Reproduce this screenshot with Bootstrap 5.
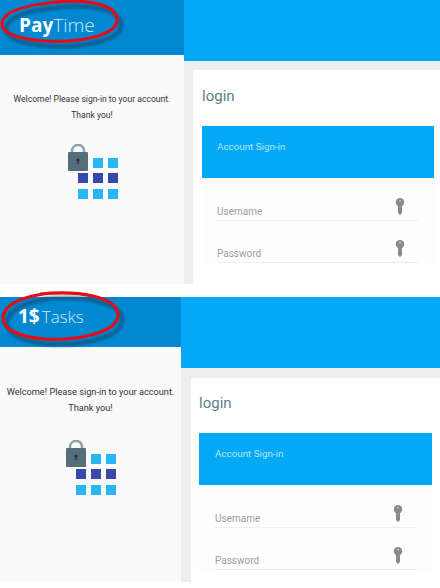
<!DOCTYPE html>
<html lang="en">
  <head>
    <meta charset="UTF-8" />
    <meta name="viewport" content="width=device-width, initial-scale=1.0" />
    <title>Login</title>
    <link href="https://cdn.jsdelivr.net/npm/bootstrap@5.3.0/dist/css/bootstrap.min.css" rel="stylesheet" />
    <style>
      body {
        background-color: #fff;
        font-family: Roboto, "Liberation Sans", sans-serif;
        overflow: hidden;
      }

      .shot {
        position: relative;
        height: 284px;
        margin-bottom: 13px;
      }

      .shot-b {
        height: 285px;
        margin-bottom: 0;
      }

      .side {
        width: 184px;
        flex: none;
        background-color: #fafafa;
      }

      .shot-b .side {
        width: 181px;
      }

      .brand {
        height: 55px;
        background-color: #0288d1;
        color: #fff;
        font-family: "Open Sans", sans-serif;
        font-size: 19px;
        line-height: 50px;
        padding-left: 19px;
      }

      .shot-b .brand {
        height: 50px;
        line-height: 39px;
        padding-left: 18px;
      }

      .brand b {
        font-weight: 700;
      }

      .brand span {
        font-weight: 300;
        color: #cfeafa;
      }

      .shot-b .brand span {
        font-size: 17px;
        margin-left: 2px;
      }

      .welcome {
        padding-top: 36px;
        font-size: 8.6px;
        line-height: 16px;
        color: #333;
      }

      .shot-b .welcome {
        padding-top: 37px;
        font-size: 9.2px;
      }

      .lockart {
        display: block;
        width: 50px;
        height: 56px;
        margin: 21px 0 0 68px;
      }

      .shot-b .lockart {
        margin: 24px 0 0 66px;
      }

      .main {
        background-color: #eceff1;
        min-width: 0;
      }

      .topblue {
        height: 61px;
        background-color: #03a9f4;
      }

      .shot-b .topblue {
        height: 71px;
      }

      .sheet {
        background-color: #fff;
        margin: 9px 0 0 9px;
        padding: 0 6px 0 9px;
      }

      .shot-b .sheet {
        margin: 10px 0 0 10px;
        padding: 0 8px 0 8px;
      }

      .sheet h1 {
        font-size: 15px;
        font-weight: 400;
        color: #607d8b;
        margin: 0;
        padding: 16px 0 19px;
        line-height: 21px;
      }

      .shot-b .sheet h1 {
        padding: 15px 0 19px;
      }

      .signin {
        height: 52px;
        background-color: #03a9f4;
        color: #b3e5fc;
        font-size: 9.8px;
        padding: 14px 15px;
        line-height: 14px;
      }

      .shot-b .signin {
        padding-left: 16px;
      }

      .fields {
        padding: 23px 16px 0 15px;
        background-color: #fdfdfd;
      }

      .shot-b .fields {
        padding: 23px 16px 0 16px;
      }

      .field {
        height: 20px;
        margin-bottom: 22px;
        border-bottom: 1px solid #eeeef2;
        color: #9e9e9e;
        font-size: 10px;
        line-height: 21px;
      }

      .keyicon {
        width: 10px;
        height: 17px;
        margin: -3px 13px 0 0;
      }

      .logo-ring {
        top: 0;
      }

      .shot-b .logo-ring {
        top: -8px;
      }
    </style>
  </head>
  <body>
    <svg width="0" height="0" class="position-absolute">
      <defs>
        <filter id="soft" x="-10%" y="-20%" width="120%" height="140%"><feGaussianBlur stdDeviation="1.6" /></filter>
      </defs>
    </svg>
    <div class="shot d-flex">
      <div class="side">
        <div class="brand"><b>Pay</b><span>Time</span></div>
        <div class="welcome text-center">Welcome! Please sign-in to your account.<br />Thank you!</div>
        <svg class="lockart" viewBox="0 0 50 56">
          <path d="M4 9V6a6 6 0 0 1 6-5h1a6 6 0 0 1 5 5v3" fill="none" stroke="#90a4ae" stroke-width="2.5" />
          <rect x="0" y="8" width="20" height="19" rx="1" fill="#546e7a" />
          <circle cx="10" cy="16" r="1.6" fill="#263238" /><rect x="9.3" y="16" width="1.4" height="4" fill="#263238" />
          <g fill="#29b6f6">
            <rect x="25" y="14" width="10" height="10" /><rect x="40" y="14" width="10" height="10" />
            <rect x="10" y="45" width="10" height="10" /><rect x="25" y="45" width="10" height="10" /><rect x="40" y="45" width="10" height="10" />
          </g>
          <g fill="#3949ab">
            <rect x="10" y="29" width="10" height="10" /><rect x="25" y="29" width="10" height="10" /><rect x="40" y="29" width="10" height="10" />
          </g>
        </svg>
      </div>
      <div class="main flex-grow-1 overflow-hidden">
        <div class="topblue"></div>
        <div class="sheet h-100">
          <h1>login</h1>
          <div class="signin">Account Sign-in</div>
          <div class="fields">
            <div class="field d-flex justify-content-between">Username
              <svg class="keyicon" viewBox="0 0 10 17"><circle cx="5" cy="4.2" r="4.2" fill="#8a8a8a" /><path d="M3 7h4v8l-2 2-2-2z" fill="#8a8a8a" /><circle cx="5" cy="2.6" r=".9" fill="#ccc" /></svg>
            </div>
            <div class="field d-flex justify-content-between">Password
              <svg class="keyicon" viewBox="0 0 10 17"><circle cx="5" cy="4.2" r="4.2" fill="#8a8a8a" /><path d="M3 7h4v8l-2 2-2-2z" fill="#8a8a8a" /><circle cx="5" cy="2.6" r=".9" fill="#ccc" /></svg>
            </div>
          </div>
        </div>
      </div>
      <svg class="position-absolute start-0 logo-ring" width="130" height="56" viewBox="0 0 130 56">
        <path d="M48 3C85 -2 117 4 117 20C117 36 78 43 45 41C17 39 1 33 2 23C3 11 26 5 57 2" fill="none" stroke="#0b3a5c" stroke-opacity=".6" stroke-width="4" transform="translate(4 5)" filter="url(#soft)" />
        <path d="M48 3C85 -2 117 4 117 20C117 36 78 43 45 41C17 39 1 33 2 23C3 11 26 5 57 2" fill="none" stroke="#e30d17" stroke-width="3.2" />
      </svg>
    </div>

    <div class="shot shot-b d-flex">
      <div class="side">
        <div class="brand"><b>1$</b><span>Tasks</span></div>
        <div class="welcome text-center">Welcome! Please sign-in to your account.<br />Thank you!</div>
        <svg class="lockart" viewBox="0 0 50 56">
          <path d="M4 9V6a6 6 0 0 1 6-5h1a6 6 0 0 1 5 5v3" fill="none" stroke="#90a4ae" stroke-width="2.5" />
          <rect x="0" y="8" width="20" height="19" rx="1" fill="#546e7a" />
          <circle cx="10" cy="16" r="1.6" fill="#263238" /><rect x="9.3" y="16" width="1.4" height="4" fill="#263238" />
          <g fill="#29b6f6">
            <rect x="25" y="14" width="10" height="10" /><rect x="40" y="14" width="10" height="10" />
            <rect x="10" y="45" width="10" height="10" /><rect x="25" y="45" width="10" height="10" /><rect x="40" y="45" width="10" height="10" />
          </g>
          <g fill="#3949ab">
            <rect x="10" y="29" width="10" height="10" /><rect x="25" y="29" width="10" height="10" /><rect x="40" y="29" width="10" height="10" />
          </g>
        </svg>
      </div>
      <div class="main flex-grow-1 overflow-hidden">
        <div class="topblue"></div>
        <div class="sheet h-100">
          <h1>login</h1>
          <div class="signin">Account Sign-in</div>
          <div class="fields">
            <div class="field d-flex justify-content-between">Username
              <svg class="keyicon" viewBox="0 0 10 17"><circle cx="5" cy="4.2" r="4.2" fill="#8a8a8a" /><path d="M3 7h4v8l-2 2-2-2z" fill="#8a8a8a" /><circle cx="5" cy="2.6" r=".9" fill="#ccc" /></svg>
            </div>
            <div class="field d-flex justify-content-between">Password
              <svg class="keyicon" viewBox="0 0 10 17"><circle cx="5" cy="4.2" r="4.2" fill="#8a8a8a" /><path d="M3 7h4v8l-2 2-2-2z" fill="#8a8a8a" /><circle cx="5" cy="2.6" r=".9" fill="#ccc" /></svg>
            </div>
          </div>
        </div>
      </div>
      <svg class="position-absolute start-0 logo-ring" width="130" height="64" viewBox="0 0 130 64">
        <path d="M40 5C80 1 118 8 118 26C118 44 76 52 45 50C18 48 2 40 3 28C4 15 24 7 50 4" fill="none" stroke="#0b3a5c" stroke-opacity=".6" stroke-width="4" transform="translate(4 5)" filter="url(#soft)" />
        <path d="M40 5C80 1 118 8 118 26C118 44 76 52 45 50C18 48 2 40 3 28C4 15 24 7 50 4" fill="none" stroke="#e30d17" stroke-width="3.2" />
      </svg>
    </div>
    <script src="https://cdn.jsdelivr.net/npm/bootstrap@5.3.0/dist/js/bootstrap.bundle.min.js"></script>
  </body>
</html>
